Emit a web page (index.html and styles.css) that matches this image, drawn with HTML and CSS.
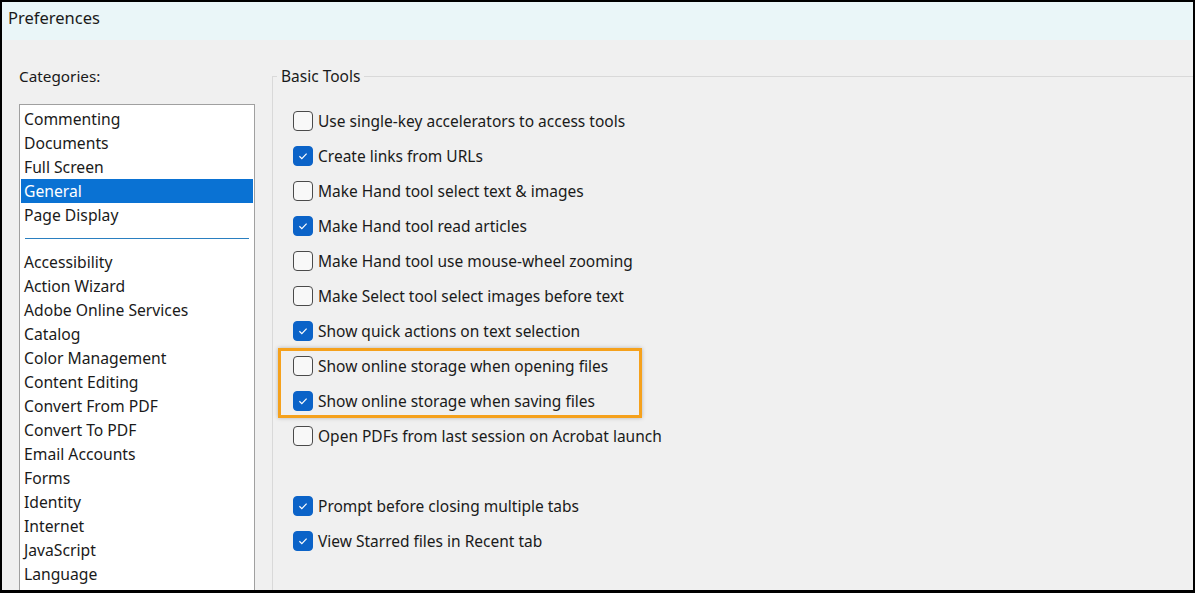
FILE: index.html
```html
<!DOCTYPE html>
<html>
<head>
<meta charset="utf-8">
<link rel="stylesheet" href="styles.css">
</head>
<body>
<div class="window">
  <div class="titlebar">Preferences</div>
  <div class="main">
    <div class="left">
      <div class="cat-label">Categories:</div>
      <div class="listbox">
        <div class="item">Commenting</div>
        <div class="item">Documents</div>
        <div class="item">Full Screen</div>
        <div class="item selected">General</div>
        <div class="item">Page Display</div>
        <div class="sep"></div>
        <div class="item">Accessibility</div>
        <div class="item">Action Wizard</div>
        <div class="item">Adobe Online Services</div>
        <div class="item">Catalog</div>
        <div class="item">Color Management</div>
        <div class="item">Content Editing</div>
        <div class="item">Convert From PDF</div>
        <div class="item">Convert To PDF</div>
        <div class="item">Email Accounts</div>
        <div class="item">Forms</div>
        <div class="item">Identity</div>
        <div class="item">Internet</div>
        <div class="item">JavaScript</div>
        <div class="item">Language</div>
      </div>
    </div>
    <div class="group">
      <div class="group-head"><span class="group-title">Basic Tools</span></div>
      <div class="rows">
        <div class="row"><span class="cb"></span>Use single-key accelerators to access tools</div>
        <div class="row"><span class="cb on"><svg viewBox="0 0 20 20"><path d="M6 10.3 L8.7 13 L14 7.3"/></svg></span>Create links from URLs</div>
        <div class="row"><span class="cb"></span>Make Hand tool select text &amp; images</div>
        <div class="row"><span class="cb on"><svg viewBox="0 0 20 20"><path d="M6 10.3 L8.7 13 L14 7.3"/></svg></span>Make Hand tool read articles</div>
        <div class="row"><span class="cb"></span>Make Hand tool use mouse-wheel zooming</div>
        <div class="row"><span class="cb"></span>Make Select tool select images before text</div>
        <div class="row"><span class="cb on"><svg viewBox="0 0 20 20"><path d="M6 10.3 L8.7 13 L14 7.3"/></svg></span>Show quick actions on text selection</div>
        <div class="row"><span class="cb"></span>Show online storage when opening files</div>
        <div class="row"><span class="cb on"><svg viewBox="0 0 20 20"><path d="M6 10.3 L8.7 13 L14 7.3"/></svg></span>Show online storage when saving files</div>
        <div class="row"><span class="cb"></span>Open PDFs from last session on Acrobat launch</div>
        <div class="spacer"></div>
        <div class="row"><span class="cb on"><svg viewBox="0 0 20 20"><path d="M6 10.3 L8.7 13 L14 7.3"/></svg></span>Prompt before closing multiple tabs</div>
        <div class="row"><span class="cb on"><svg viewBox="0 0 20 20"><path d="M6 10.3 L8.7 13 L14 7.3"/></svg></span>View Starred files in Recent tab</div>
      </div>
    </div>
  </div>
  <div class="highlight"></div>
</div>
</body>
</html>
```

FILE: styles.css
```css
html, body {
  margin: 0;
  padding: 0;
  background: #000;
}
body {
  width: 1195px;
  height: 593px;
  overflow: hidden;
  font-family: "Noto Sans", "Open Sans", sans-serif;
  font-size: 15.5px;
  color: #1a1a1a;
}
.window {
  position: relative;
  box-sizing: border-box;
  width: 1195px;
  height: 593px;
  border-style: solid;
  border-color: #000;
  border-width: 2px 2px 3px 2px;
  background: #f0f0f0;
  display: flex;
  flex-direction: column;
  overflow: hidden;
}
.titlebar {
  height: 38px;
  flex: none;
  background: #eaf6f8;
  padding-left: 6px;
  line-height: 32px;
  font-size: 16.5px;
}
.main {
  flex: 1;
  display: flex;
  min-height: 0;
}
.left {
  width: 270px;
  flex: none;
  padding-left: 17px;
  box-sizing: border-box;
}
.cat-label {
  margin-top: 26px;
  height: 20px;
  line-height: 20px;
  font-size: 15.3px;
}
.listbox {
  margin-top: 18px;
  width: 236px;
  height: 600px;
  box-sizing: border-box;
  background: #fff;
  border: 1px solid #a0a0a0;
  padding: 2px 1px 0 1px;
}
.item {
  height: 24px;
  line-height: 24px;
  padding-left: 3px;
  font-size: 15.7px;
}
.item.selected {
  background: #0a72d3;
  color: #fff;
}
.sep {
  height: 1px;
  background: #2a7fc0;
  margin: 11px 4px 11px 4px;
}
.group {
  flex: 1;
  margin-top: 36px;
  border-left: 1px solid #d9d9d9;
}
.group-head {
  display: flex;
  align-items: center;
  height: 20px;
  margin-top: -10px;
}
.group-head::before {
  content: "";
  width: 4px;
  border-top: 1px solid #d9d9d9;
}
.group-head::after {
  content: "";
  flex: 1;
  border-top: 1px solid #d9d9d9;
}
.group-title {
  padding: 0 4px;
  font-size: 15.5px;
  line-height: 20px;
}
.rows {
  padding: 17px 0 0 20px;
}
.row {
  height: 35px;
  display: flex;
  align-items: center;
  font-size: 15.5px;
}
.spacer {
  height: 35px;
}
.cb {
  width: 20px;
  height: 20px;
  box-sizing: border-box;
  border: 1px solid #4a4a4a;
  border-radius: 4px;
  background: #f8f8f8;
  margin-right: 5px;
  flex: none;
  display: flex;
}
.cb.on {
  background: #0b63c8;
  border-color: #0b63c8;
}
.cb svg {
  width: 18px;
  height: 18px;
}
.cb path {
  fill: none;
  stroke: #fff;
  stroke-width: 1.3;
}
.highlight {
  position: absolute;
  left: 276px;
  top: 346px;
  width: 364px;
  height: 70px;
  box-sizing: border-box;
  border: 3px solid #f5a11c;
  box-shadow: 0 0 4px rgba(0, 0, 0, 0.25);
}
```
